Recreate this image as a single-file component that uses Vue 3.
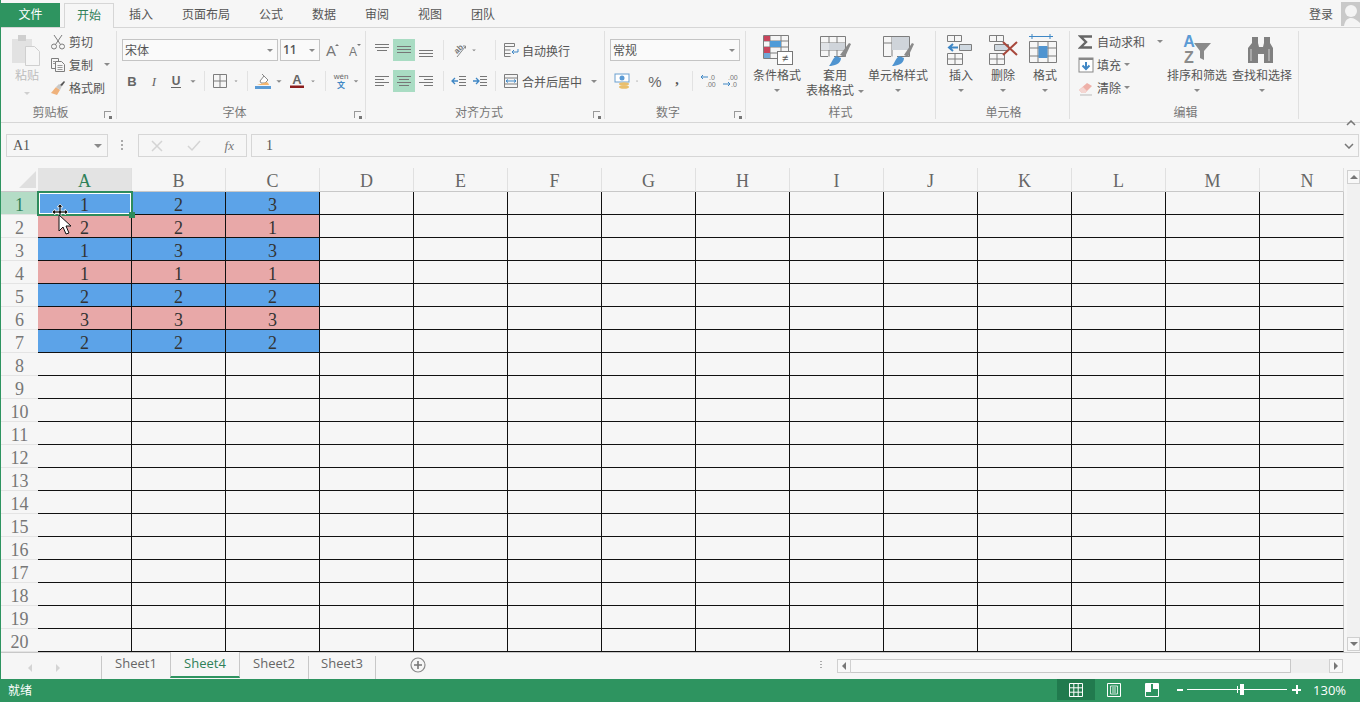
<script setup>
const G = 'fill="none" stroke="#7d7d7d"'
const lines = (rows) => rows.map(([x, y, l]) => `<path d="M${x} ${y}.5h${l}" stroke="#777"/>`).join("")

// 16x16 icons unless noted
const icons = {
  cut: `<circle cx="4" cy="12.5" r="2.5" ${G}/><circle cx="12" cy="12.5" r="2.5" ${G}/><path d="M5.5 10.5 12 1M10.5 10.5 4 1" ${G}/>`,
  copy: `<path d="M5 11.5H1.5v-10h7v3" ${G}/><path d="M5.5 4.5h6l3 3v7h-9z" ${G}/><path d="M7.5 8.5h5M7.5 10.5h5M7.5 12.5h5M3 4.5h3M3 6.5h2" stroke="#999"/>`,
  brush: `<path d="M1 13 6 7l4 3-3 5z" fill="#efb27c"/><path d="M6 7l3-3 3 2-2 4z" fill="#c8c8c8"/><path d="M10 5l4-4 1 1-3 4z" fill="#555"/>`,
  sum: `<path d="M14 2.500H2.500L8 8l-5.500 5.500H14" fill="none" stroke="#666" stroke-width="2.400"/>`,
  fill: `<rect x="1" y="1" width="14" height="14" fill="#fff" stroke="#888"/><path d="M1 1h14v2H1z" fill="#888"/><path d="M8 5v7M4.500 8.500 8 12l3.500-3.500" fill="none" stroke="#3f87c5" stroke-width="2"/>`,
  eraser: `<path d="M1 10 9 3l5 3-7 7H4z" fill="#eeb0a8"/><path d="M1 10l3 3h3l2-2-4-4z" fill="#f4d6d2"/><path d="M2 15h12" stroke="#bbb"/>`,
  bold: `<text x="8" y="13" text-anchor="middle" font-size="13" font-weight="700" font-family="Liberation Sans" fill="#666">B</text>`,
  italic: `<text x="8" y="13" text-anchor="middle" font-size="13" font-style="italic" font-family="Liberation Serif" fill="#666">I</text>`,
  under: `<text x="8" y="12" text-anchor="middle" font-size="12" font-weight="700" font-family="Liberation Sans" fill="#666">U</text><path d="M3 14.500h10" stroke="#666"/>`,
  borders: `<path d="M1.500 1.500h13v13h-13zM8 1.500v13M1.500 8h13" ${G}/>`,
  paint: `<path d="M5 8 9 3l4 4-3 3H6z" fill="#fff" stroke="#888"/><path d="M9 3 7 1" stroke="#888"/><path d="M12 9c1 1 2 2 2 3H2" fill="#f5b66e"/><path d="M0 13h16v3H0z" fill="#5b9bd5"/>`,
  color: `<text x="8" y="11" text-anchor="middle" font-size="13" font-weight="700" font-family="Liberation Sans" fill="#666">A</text><path d="M1 12.500h14V15H1z" fill="#8c1d1d"/>`,
  up: `<text x="7" y="14" text-anchor="middle" font-size="15" font-family="Liberation Sans" fill="#777">A</text><path d="M11 4l2-2 2 2z" fill="#777"/>`,
  down: `<text x="7" y="14" text-anchor="middle" font-size="12" font-family="Liberation Sans" fill="#777">A</text><path d="M11 2l2 2 2-2z" fill="#777"/>`,
  alTop: lines([[1, 2, 14], [1, 5, 14], [3, 8, 10]]),
  alMid: lines([[1, 4, 14], [1, 7, 14], [1, 10, 14]]),
  alBot: lines([[1, 8, 14], [1, 11, 14], [1, 14, 14]]),
  alLeft: lines([[1, 3, 14], [1, 6, 9], [1, 9, 14], [1, 12, 9]]),
  alCenter: lines([[1, 3, 14], [3, 6, 10], [1, 9, 14], [3, 12, 10]]),
  alRight: lines([[1, 3, 14], [6, 6, 9], [1, 9, 14], [6, 12, 9]]),
  orient: `<text x="3" y="11" font-size="8" font-weight="700" transform="rotate(-45 6 8)" font-family="Liberation Sans" fill="#777">ab</text><path d="M6 15 14 5M12 4h2.500v2.500" fill="none" stroke="#888"/>`,
  indL: `<path d="M1 8h6M4 5 1 8l3 3" fill="none" stroke="#3f87c5" stroke-width="1.300"/>` + lines([[8, 3, 7], [8, 6, 7], [8, 9, 7], [8, 12, 7]]),
  indR: `<path d="M1 8h6M4 5l3 3-3 3" fill="none" stroke="#3f87c5" stroke-width="1.300"/>` + lines([[8, 3, 7], [8, 6, 7], [8, 9, 7], [8, 12, 7]]),
  wrap: `<path d="M1.500 1.500h10v3h-10zM1.500 4.500v10h6M1.500 8h6M1.500 11.500h6" ${G}/><path d="M15 7v3H9M11 8 9 10l2 2" fill="none" stroke="#3f87c5"/>`,
  merge: `<path d="M1.500 1.500h13v13h-13zM1.500 5h13M1.500 11h13" ${G}/><path d="M3 8h10M5 6.500 3 8l2 1.500M11 6.500 13 8l-2 1.500" fill="none" stroke="#3f87c5"/>`,
  money: `<rect x="1" y="1" width="14" height="8" fill="#fff" stroke="#6a9fcf"/><circle cx="8" cy="5" r="2.500" fill="#5b9bd5"/><ellipse cx="10" cy="11" rx="5" ry="1.800" fill="#e9bf6d"/><ellipse cx="10" cy="14" rx="5" ry="1.800" fill="#e9bf6d"/>`,
  percent: `<text x="8" y="14" text-anchor="middle" font-size="15" font-family="Liberation Sans" fill="#666">%</text>`,
  comma: `<text x="8" y="11" text-anchor="middle" font-size="16" font-weight="700" font-family="Liberation Serif" fill="#555">,</text>`,
  decUp: `<text x="9" y="7" font-size="7" font-family="Liberation Sans" fill="#777">.0</text><text x="6" y="14" font-size="7" font-family="Liberation Sans" fill="#777">.00</text><path d="M1 4h7M3 2 1 4l2 2" fill="none" stroke="#3f87c5"/>`,
  decDown: `<text x="6" y="7" font-size="7" font-family="Liberation Sans" fill="#777">.00</text><text x="9" y="14" font-size="7" font-family="Liberation Sans" fill="#777">.0</text><path d="M1 11h7M6 9l2 2-2 2" fill="none" stroke="#3f87c5"/>`,
  caret: `<path d="M0 0h6L3 3z" fill="#8a8a8a" transform="translate(5 7)"/>`,
}

const large = {
  cond: `<path d="M3.500 2.500h25v23h-25zM3.500 8h25M3.500 14h25M3.500 20h25M10 2.500v23M21 2.500v23" ${G}/><path d="M10 8h11v6H10z" fill="#4f9bd8"/><path d="M4 3h6v5H4zM4 14h6v6H4z" fill="#c9455c"/><path d="M4 20h6v5H4z" fill="#6fa8d6"/><rect x="17.500" y="18.500" width="15" height="13" fill="#fff" stroke="#777"/><text x="25" y="29" text-anchor="middle" font-size="11" font-family="Liberation Sans" fill="#555">≠</text>`,
  table: `<path d="M2.500 3.500h25v20H16" ${G}/><path d="M2.500 3.500v20H10M11 3.500v20M19 3.500v20M2.500 10h25M2.500 17h25" ${G}/><path d="M11 10h16v7H11z" fill="#cfd4da"/><path d="M3 10h8v7H3z" fill="#dfe2e6"/><path d="M22 22l9-12 2 1-6 13z" fill="#8a8a8a"/><path d="M11 33c5 0 12-2 12-8l-5-2c-4 3-4 7-7 10z" fill="#4f94d0"/>`,
  style: `<path d="M2.500 3.500h26v20H16M2.500 3.500v20H10M2.500 10h26M11 3.500v20M24 3.500v8" ${G}/><path d="M11 4h17v13H11z" fill="#cfd4da"/><path d="M23 22l8-12 2 1-6 13z" fill="#8a8a8a"/><path d="M11 33c5 0 12-2 12-8l-5-2c-4 3-4 7-7 10z" fill="#4f94d0"/>`,
  insert: `<path d="M3.500 2.500h14v6h-14zM10.500 2.500v6M3.500 20.500h15v11h-15zM11 20.500v11M3.500 26h15M15.500 11.500h12v6h-12zM21.500 11.500v6" ${G}/><path d="M16 12h11v5H16z" fill="#cfd8e0"/><path d="M14 14.500H6M9 11l-4 3.500 4 3.500" fill="none" stroke="#3f87c5" stroke-width="2"/>`,
  remove: `<path d="M3.500 2.500h14v6h-14zM10.500 2.500v6M3.500 20.500h15v11h-15zM11 20.500v11M3.500 26h15M8.500 11.500h14v6h-14z" ${G}/><path d="M9 12h13v5H9z" fill="#cfd8e0"/><path d="M17 9l14 13M31 9 17 22" stroke="#a8483c" stroke-width="2"/>`,
  format: `<path d="M1 3.500h24M4 1v5M22 1v5M5 3.500h16" fill="none" stroke="#3f87c5"/><path d="M1.500 8.500h27v21M1.500 8.500v21M10 8.500v21M20 8.500v21M1.500 15h27M1.500 23h27M1.500 29.500h27" ${G}/><path d="M10.500 13h9v12h-9z" fill="#4f94d0"/>`,
  sort: `<text x="9" y="14" text-anchor="middle" font-size="16" font-weight="700" font-family="Liberation Sans" fill="#5b9bd5">A</text><text x="9" y="30" text-anchor="middle" font-size="16" font-weight="700" font-family="Liberation Sans" fill="#8a8a8a">Z</text><path d="M14 10h17l-7 8v9l-4-2v-7z" fill="#8a8a8a"/>`,
  find: `<path d="M7 4h6v6l1 4h4l1-4V4h6v6l3 5v15H19V21h-6v9H3V15l4-5z" fill="#808080"/><path d="M6 16v12M24 16v12" stroke="#a8a8a8" stroke-width="2"/>`,
}

const tabs = ["插入", "页面布局", "公式", "数据", "审阅", "视图", "团队"]
const tabWidths = [54, 76, 54, 52, 54, 52, 54]

const fontRow = [
  { w: 20, i: "bold" }, { w: 24, i: "italic" }, { w: 20, i: "under" }, { w: 14, i: "caret" }, { sep: 1, w: 8 },
  { w: 24, i: "borders" }, { w: 8, i: "caret" }, { sep: 1, w: 14 }, { w: 18, i: "paint" }, { w: 14, i: "caret" },
  { w: 22, i: "color" }, { w: 10, i: "caret" }, { sep: 1, w: 14 }, { w: 18, wen: 1 }, { w: 12, i: "caret" },
]
const alignTop = [
  { w: 22, i: "alTop" }, { w: 22, i: "alMid", on: 1 }, { w: 22, i: "alBot" }, { sep: 1, w: 12 },
  { w: 20, i: "orient" }, { w: 10, i: "caret" }, { w: 8 }, { sep: 1, w: 16 },
]
const alignBottom = [
  { w: 22, i: "alLeft" }, { w: 22, i: "alCenter", on: 1 }, { w: 22, i: "alRight" }, { sep: 1, w: 12 },
  { w: 20, i: "indL" }, { w: 22, i: "indR" }, { sep: 1, w: 8 }, { w: 4 },
]
const numberRow = [
  { w: 24, i: "money" }, { w: 6, i: "caret" }, { w: 30, i: "percent" }, { w: 14, i: "comma" }, { sep: 1, w: 16 },
  { w: 16, i: "decUp" }, { w: 6 }, { w: 16, i: "decDown" },
]

const styleBtns = [
  { w: 62, i: "cond", label: ["条件格式"] },
  { w: 54, i: "table", label: ["套用", "表格格式"], inline: true },
  { w: 72, i: "style", label: ["单元格样式"] },
]
const cellBtns = [
  { w: 42, i: "insert", label: ["插入"] },
  { w: 42, i: "remove", label: ["删除"] },
  { w: 42, i: "format", label: ["格式"] },
]
const editBtns = [
  { w: 62, i: "sort", label: ["排序和筛选"] },
  { w: 68, i: "find", label: ["查找和选择"] },
]

const columns = "ABCDEFGHIJKLMN".split("")
const data = [
  [1, 2, 3],
  [2, 2, 1],
  [1, 3, 3],
  [1, 1, 1],
  [2, 2, 2],
  [3, 3, 3],
  [2, 2, 2],
]
const rows = Array.from({ length: 20 }, (_, i) => i + 1)

function rowClass(r) {
  if (r > 7) return ""
  return r % 2 ? "blue" : "pink"
}
function cellValue(r, c) {
  return data[r - 1] ? data[r - 1][c] : ""
}
</script>

<template>
  <div class="app">
    <!-- 탭 -->
    <div class="tabbar">
      <div class="file">文件</div>
      <div class="tab active">开始</div>
      <div v-for="(t, n) in tabs" :key="t" class="tab" :style="{ width: tabWidths[n] + 'px' }">{{ t }}</div>
      <div class="login">登录</div>
      <svg class="avatar" width="19" height="24" viewBox="0 0 19 24">
        <path d="M0 0h19v24H0z" fill="#c9c9c9" />
        <circle cx="10" cy="9" r="6" fill="#f4f4f4" />
        <path d="M3 24c1-6 4-8 7-8s6 2 9 5v3z" fill="#f4f4f4" />
      </svg>
    </div>

    <div class="ribbon">
      <section class="group clip">
        <div class="body clip-body">
          <div class="paste">
            <svg width="32" height="32" viewBox="0 0 32 32">
              <path d="M1 5h20v24H1z" fill="#e2e2e2" />
              <path d="M7 1h8v6H7z" fill="#cfcfcf" />
              <path d="M14.500 12.500h9l5 5v14h-14z" fill="#f6f6f6" stroke="#cfcfcf" />
            </svg>
            <span>粘贴</span>
            <i class="caret light"></i>
          </div>
          <div class="small-col">
            <div class="small"><svg width="16" height="16" viewBox="0 0 16 16" v-html="icons.cut" /><span>剪切</span></div>
            <div class="small"><svg width="16" height="16" viewBox="0 0 16 16" v-html="icons.copy" /><span>复制</span><i class="caret copy-caret"></i></div>
            <div class="small"><svg width="16" height="16" viewBox="0 0 16 16" v-html="icons.brush" /><span>格式刷</span></div>
          </div>
        </div>
        <div class="label">剪贴板<i class="launcher"></i></div>
      </section>

      <section class="group font">
        <div class="body rows">
          <div class="row">
            <div class="select font-name"><span>宋体</span><i class="caret"></i></div>
            <div class="select font-size"><span>11</span><i class="caret"></i></div>
            <span class="cell w22"><svg width="16" height="16" viewBox="0 0 16 16" v-html="icons.up" /></span>
            <span class="cell w22"><svg width="16" height="16" viewBox="0 0 16 16" v-html="icons.down" /></span>
          </div>
          <div class="row">
            <span v-for="(c, n) in fontRow" :key="n" class="cell" :class="{ sep: c.sep }" :style="{ width: c.w + 'px' }">
              <svg v-if="c.i" width="16" height="16" viewBox="0 0 16 16" v-html="icons[c.i]" />
              <span v-if="c.wen" class="wen"><b>wén</b><b class="wen-zi">文</b></span>
            </span>
          </div>
        </div>
        <div class="label">字体<i class="launcher"></i></div>
      </section>

      <section class="group align">
        <div class="body rows">
          <div class="row">
            <span v-for="(c, n) in alignTop" :key="n" class="cell" :class="{ sep: c.sep, on: c.on }" :style="{ width: c.w + 'px' }">
              <svg v-if="c.i" width="16" height="16" viewBox="0 0 16 16" v-html="icons[c.i]" />
            </span>
            <svg class="inline-ic" width="16" height="16" viewBox="0 0 16 16" v-html="icons.wrap" />
            <span class="wrap-txt">自动换行</span>
          </div>
          <div class="row">
            <span v-for="(c, n) in alignBottom" :key="n" class="cell" :class="{ sep: c.sep, on: c.on }" :style="{ width: c.w + 'px' }">
              <svg v-if="c.i" width="16" height="16" viewBox="0 0 16 16" v-html="icons[c.i]" />
            </span>
            <svg class="inline-ic" width="16" height="16" viewBox="0 0 16 16" v-html="icons.merge" />
            <span class="wrap-txt">合并后居中</span>
            <i class="caret merge-caret"></i>
          </div>
        </div>
        <div class="label">对齐方式<i class="launcher"></i></div>
      </section>

      <section class="group number">
        <div class="body rows">
          <div class="row">
            <div class="select num-format"><span>常规</span><i class="caret"></i></div>
          </div>
          <div class="row">
            <span v-for="(c, n) in numberRow" :key="n" class="cell" :class="{ sep: c.sep }" :style="{ width: c.w + 'px' }">
              <svg v-if="c.i" width="16" height="16" viewBox="0 0 16 16" v-html="icons[c.i]" />
            </span>
          </div>
        </div>
        <div class="label">数字<i class="launcher"></i></div>
      </section>

      <section class="group styles">
        <div class="body bigs">
          <div v-for="b in styleBtns" :key="b.i" class="big" :style="{ width: b.w + 'px' }">
            <svg width="34" height="34" viewBox="0 0 34 34" v-html="large[b.i]" />
            <span v-for="l in b.label" :key="l" class="big-txt">{{ l }}<i v-if="b.inline && l === '表格格式'" class="caret side"></i></span>
            <i v-if="!b.inline" class="caret"></i>
          </div>
        </div>
        <div class="label">样式</div>
      </section>

      <section class="group cells">
        <div class="body bigs">
          <div v-for="b in cellBtns" :key="b.i" class="big" :style="{ width: b.w + 'px' }">
            <svg width="34" height="34" viewBox="0 0 34 34" v-html="large[b.i]" />
            <span class="big-txt">{{ b.label[0] }}</span>
            <i class="caret"></i>
          </div>
        </div>
        <div class="label">单元格</div>
      </section>

      <section class="group edit">
        <div class="body bigs">
          <div class="small-col edit-col">
            <div class="small"><svg width="16" height="16" viewBox="0 0 16 16" v-html="icons.sum" /><span>自动求和</span><i class="caret sum-caret"></i></div>
            <div class="small"><svg width="16" height="16" viewBox="0 0 16 16" v-html="icons.fill" /><span>填充</span><i class="caret"></i></div>
            <div class="small"><svg width="16" height="16" viewBox="0 0 16 16" v-html="icons.eraser" /><span>清除</span><i class="caret"></i></div>
          </div>
          <div v-for="b in editBtns" :key="b.i" class="big" :style="{ width: b.w + 'px' }">
            <svg width="34" height="34" viewBox="0 0 34 34" v-html="large[b.i]" />
            <span class="big-txt">{{ b.label[0] }}</span>
            <i class="caret"></i>
          </div>
        </div>
        <div class="label">编辑</div>
      </section>

      <div class="collapse">
        <svg width="10" height="6" viewBox="0 0 10 6"><path d="M1 5l4-4 4 4" fill="none" stroke="#777" stroke-width="1.500" /></svg>
      </div>
    </div>

    <!-- 수식 입력줄 -->
    <div class="formula">
      <div class="namebox"><span>A1</span><i class="caret"></i></div>
      <div class="dots"></div>
      <div class="fx-btns">
        <svg width="12" height="12" viewBox="0 0 12 12"><path d="M1 1l10 10M11 1 1 11" stroke="#d4d4d4" stroke-width="1.500" /></svg>
        <svg width="14" height="12" viewBox="0 0 14 12"><path d="M1 6l4 4 8-9" fill="none" stroke="#d4d4d4" stroke-width="1.500" /></svg>
        <em>fx</em>
      </div>
      <div class="fx-input">
        <span>1</span>
        <svg width="10" height="6" viewBox="0 0 10 6"><path d="M1 1l4 4 4-4" fill="none" stroke="#777" stroke-width="1.500" /></svg>
      </div>
    </div>

    <!-- 시트 영역 -->
    <div class="sheet-wrap">
      <div class="sheet">
        <div class="corner"><i></i></div>
        <div v-for="(c, n) in columns" :key="c" class="col-head" :class="{ current: n === 0, last: n === 13 }">{{ c }}</div>
        <template v-for="r in rows" :key="r">
          <div class="row-head" :class="{ current: r === 1 }">{{ r }}</div>
          <div
            v-for="(c, n) in columns"
            :key="c"
            class="data"
            :class="[n < 3 ? rowClass(r) : '', { last: n === 13 }]"
          >{{ cellValue(r, n) }}</div>
        </template>

        <div class="selection"><i></i></div>
        <svg class="pointer" width="26" height="32" viewBox="0 0 26 32">
          <path d="M11 1l3 3h-2v4h4V6l3 3-3 3v-2h-4v3h-2v-3H6v2L3 9l3-3v2h4V4H8z" fill="#111" stroke="#fff" stroke-width=".7" />
          <path d="M10 12v16l4-4 3 7 3-1-3-7h5z" fill="#fff" stroke="#111" />
        </svg>
      </div>
      <div class="vscroll">
        <div class="sc-btn"><i class="tri-up"></i></div>
        <div class="sc-btn"><i class="tri-down"></i></div>
      </div>
    </div>

    <!-- 시트 탭 -->
    <div class="sheetbar">
      <div class="nav"><i class="tri-l"></i><i class="tri-r"></i></div>
      <div class="stab">Sheet1</div>
      <div class="stab now">Sheet4</div>
      <div class="stab">Sheet2</div>
      <div class="stab bordered">Sheet3</div>
      <svg class="add" width="16" height="16" viewBox="0 0 16 16">
        <circle cx="8" cy="8" r="7" fill="none" stroke="#8a8a8a" stroke-width="1.200" />
        <path d="M8 4v8M4 8h8" stroke="#777" stroke-width="1.600" />
      </svg>
      <div class="split"></div>
      <div class="hscroll">
        <div class="sc-btn"><i class="tri-l dark"></i></div>
        <div class="thumb"></div>
        <div class="gutter"></div>
        <div class="sc-btn"><i class="tri-r dark"></i></div>
      </div>
    </div>

    <div class="status">
      <span class="ready">就绪</span>
      <div class="view on">
        <svg width="14" height="14" viewBox="0 0 14 14"><path d="M.5.500h13v13H.500zM4.800.500v13M9.200.500v13M.500 4.800h13M.500 9.200h13" fill="none" stroke="#fff" /></svg>
      </div>
      <div class="view">
        <svg width="14" height="14" viewBox="0 0 14 14"><path d="M.5.500h13v13H.500z" fill="none" stroke="#fff" /><path d="M3.500 3h7v8h-7zM5 5h4M5 7h4M5 9h4" fill="none" stroke="#fff" stroke-width=".8" /></svg>
      </div>
      <div class="view">
        <svg width="14" height="14" viewBox="0 0 14 14"><path d="M.5.500h13v13H.500z" fill="none" stroke="#fff" /><path d="M1 1h5v8H1zM8 1h5v5H8z" fill="#fff" /></svg>
      </div>
      <div class="zoom">
        <i class="minus"></i>
        <div class="slider"><i class="tick"></i><i class="knob"></i></div>
        <i class="plus"></i>
      </div>
      <span class="pct">130%</span>
    </div>
  </div>
</template>

<style>
html,
body {
  margin: 0;
  background: #f6f6f6;
}
</style>

<style scoped>
.app {
  width: 1360px;
  height: 702px;
  box-sizing: border-box;
  border-left: 1px solid #2e9460;
  overflow: hidden;
  background: #f6f6f6;
  color: #555;
  font-family: "Noto Sans CJK SC", sans-serif;
  font-size: 12px;
  display: flex;
  flex-direction: column;
}

i {
  display: block;
  font-style: normal;
}

.tabbar {
  height: 28px;
  box-sizing: border-box;
  padding-top: 3px;
  display: flex;
  border-bottom: 1px solid #d6d6d6;
  flex-shrink: 0;
}
.file {
  width: 59px;
  height: 24px;
  background: #2e9460;
  color: #fff;
  text-align: center;
  line-height: 22px;
  margin-right: 4px;
}
.tab {
  width: 50px;
  height: 24px;
  line-height: 22px;
  text-align: center;
}
.tab.active {
  height: 25px;
  box-sizing: border-box;
  border: 1px solid #d6d6d6;
  border-bottom: 0;
  background: #f6f6f6;
  color: #2e8058;
  line-height: 21px;
}
.login {
  margin-left: auto;
  margin-right: 8px;
  line-height: 22px;
}
.avatar {
  margin-top: -1px;
}

.ribbon {
  height: 95px;
  box-sizing: border-box;
  border-bottom: 1px solid #d6d6d6;
  padding-top: 3px;
  display: flex;
  flex-shrink: 0;
}
.group {
  height: 88px;
  box-sizing: border-box;
  border-right: 1px solid #e0e0e0;
  display: flex;
  flex-direction: column;
  flex-shrink: 0;
}
.clip {
  width: 116px;
}
.font {
  width: 249px;
  padding-left: 5px;
}
.align {
  width: 239px;
  padding-left: 5px;
}
.number {
  width: 141px;
  padding-left: 5px;
}
.styles {
  width: 190px;
}
.cells {
  width: 134px;
  padding-left: 4px;
}
.edit {
  width: 229px;
  padding-left: 8px;
}
.body {
  height: 73px;
  flex-shrink: 0;
}
.label {
  position: relative;
  height: 15px;
  line-height: 16px;
  text-align: center;
  color: #777;
}
.clip .label {
  padding-right: 16px;
}
.font .label {
  padding-right: 18px;
}
.align .label {
  padding-right: 17px;
}
.number .label {
  padding-right: 19px;
}
.cells .label {
  padding-right: 2px;
}
.edit .label {
  padding-right: 5px;
}
.launcher {
  position: absolute;
  right: 4px;
  bottom: 1px;
  width: 6px;
  height: 6px;
  border-left: 1px solid #999;
  border-top: 1px solid #999;
}
.clip .launcher {
  right: 5px;
}
.launcher::after {
  content: "";
  position: absolute;
  right: -1px;
  bottom: -1px;
  width: 3px;
  height: 3px;
  background: #777;
}

.rows {
  padding-top: 8px;
  box-sizing: border-box;
  display: flex;
  flex-direction: column;
  gap: 9px;
}
.row {
  height: 22px;
  display: flex;
  align-items: center;
}
.cell {
  height: 22px;
  display: flex;
  align-items: center;
  justify-content: center;
  flex-shrink: 0;
  box-sizing: border-box;
}
.w22 {
  width: 22px;
}
.cell.on {
  background: #a9dcc3;
}
.cell.sep::after {
  content: "";
  width: 1px;
  height: 20px;
  background: #e2e2e2;
}
.wen {
  display: flex;
  flex-direction: column;
  align-items: center;
  font-family: "Liberation Sans", sans-serif;
  font-size: 8px;
  line-height: 8px;
  color: #666;
}
.wen b {
  font-weight: 400;
}
.wen .wen-zi {
  font-family: "Noto Sans CJK SC", sans-serif;
  font-weight: 700;
  color: #3f87c5;
}
.inline-ic {
  flex-shrink: 0;
}
.wrap-txt {
  margin-left: 3px;
  color: #555;
  white-space: nowrap;
}
.merge-caret {
  margin-left: 9px;
}

.select {
  height: 22px;
  box-sizing: border-box;
  border: 1px solid #c4c4c4;
  background: #fafafa;
  display: flex;
  align-items: center;
  justify-content: space-between;
  padding: 0 4px 2px 2px;
}
.select .caret {
  margin-top: 2px;
}
.font-name {
  width: 156px;
  margin-right: 2px;
}
.font-size {
  width: 40px;
  margin-right: 1px;
  font-family: "Open Sans", sans-serif;
  font-weight: 600;
}
.num-format {
  width: 130px;
}

.caret {
  width: 0;
  height: 0;
  border-left: 3px solid transparent;
  border-right: 3px solid transparent;
  border-top: 3px solid #8a8a8a;
  flex-shrink: 0;
}
.caret.light {
  border-top-color: #cfcfcf;
}
.caret.side {
  display: inline-block;
  margin-left: 4px;
  vertical-align: middle;
}

.clip-body {
  display: flex;
  margin-top: -1px;
  height: 74px;
}
.paste {
  padding: 4px 0 0 10px;
  box-sizing: border-box;
  color: #bdbdbd;
  display: flex;
  flex-direction: column;
  align-items: center;
  width: 42px;
}
.paste span {
  line-height: 16px;
  margin-top: 1px;
}
.paste .caret {
  margin-top: 9px;
}
.small-col {
  width: 70px;
  margin-left: 7px;
}
.small {
  height: 23px;
  display: flex;
  align-items: center;
  gap: 3px;
}
.small span {
  color: #555;
}
.copy-caret {
  margin-left: 8px;
}
.sum-caret {
  margin-left: 9px;
}

.bigs {
  display: flex;
  margin-top: -1px;
  height: 74px;
}
.big {
  flex-shrink: 0;
  display: flex;
  flex-direction: column;
  align-items: center;
  padding-top: 3px;
  box-sizing: border-box;
  white-space: nowrap;
}
.big-txt {
  line-height: 15px;
  color: #555;
}
.big > .caret {
  margin-top: 7px;
}
.edit-col {
  width: 88px;
  margin: 0;
}

.collapse {
  margin: 81px 0 0 47px;
}

.formula {
  height: 45px;
  box-sizing: border-box;
  padding-top: 11px;
  display: flex;
  align-items: flex-start;
  flex-shrink: 0;
}
.namebox {
  margin-left: 5px;
  width: 102px;
  height: 23px;
  box-sizing: border-box;
  border: 1px solid #d6d6d6;
  display: flex;
  align-items: center;
  justify-content: space-between;
  padding: 0 5px 0 6px;
  font-family: "Liberation Serif", serif;
  font-size: 14px;
}
.namebox .caret {
  border-left-width: 4px;
  border-right-width: 4px;
  border-top-width: 4px;
}
.dots {
  width: 2px;
  height: 10px;
  margin: 6px 15px 0 13px;
  background: repeating-linear-gradient(#aaa 0 2px, transparent 2px 4px);
}
.fx-btns {
  width: 109px;
  height: 23px;
  box-sizing: border-box;
  border: 1px solid #d6d6d6;
  display: flex;
  align-items: center;
  justify-content: space-between;
  padding: 0 12px;
}
.fx-btns em {
  font-family: "Liberation Serif", serif;
  font-size: 13px;
  color: #777;
}
.fx-input {
  margin-left: 4px;
  width: 1108px;
  height: 23px;
  box-sizing: border-box;
  border: 1px solid #d6d6d6;
  display: flex;
  align-items: center;
  justify-content: space-between;
  padding: 0 4px 0 14px;
  font-family: "Liberation Serif", serif;
  font-size: 14px;
}

.sheet-wrap {
  height: 484px;
  display: flex;
  overflow: hidden;
  flex-shrink: 0;
}
.sheet {
  position: relative;
  width: 1343px;
  height: 484px;
  display: grid;
  grid-template-columns: 37px repeat(13, 94px) 84px;
  grid-auto-rows: 23px;
  grid-template-rows: 24px;
  overflow: hidden;
  font-family: "Liberation Serif", "Noto Sans CJK SC", serif;
  font-size: 18px;
  flex-shrink: 0;
}
.corner {
  border-bottom: 1px solid #c8c8c8;
  box-sizing: border-box;
  display: flex;
  justify-content: flex-end;
  align-items: flex-end;
  padding: 0 2px 3px 0;
}
.corner i {
  width: 0;
  height: 0;
  border-left: 17px solid transparent;
  border-bottom: 17px solid #dfdfdf;
}
.col-head {
  box-sizing: border-box;
  border-right: 1px solid #e0e0e0;
  border-bottom: 1px solid #c8c8c8;
  text-align: center;
  line-height: 27px;
  color: #666;
}
.col-head.last {
  padding-left: 11px;
  white-space: nowrap;
}
.col-head.current {
  background: #e3e3e3;
  color: #2e8058;
  border-bottom-color: #2e9460;
}
.row-head {
  box-sizing: border-box;
  border-bottom: 1px solid #e4e4e4;
  text-align: center;
  line-height: 26px;
  color: #777;
}
.row-head.current {
  background: #b4dcc6;
  color: #2e8058;
}
.data {
  box-sizing: border-box;
  border-right: 1px solid #111;
  border-bottom: 1px solid #111;
  text-align: center;
  line-height: 26px;
  color: #333;
}
.data.last {
  border-right-color: #c8c8c8;
}
.data.blue {
  background: #5ca3e8;
}
.data.pink {
  background: #e8a8a8;
}
.selection {
  position: absolute;
  left: 36px;
  top: 23px;
  width: 96px;
  height: 25px;
  box-sizing: border-box;
  border: 2px solid #2e8b5c;
  outline: 1px solid #fff;
  outline-offset: -3px;
}
.selection i {
  position: absolute;
  right: -4px;
  bottom: -4px;
  width: 6px;
  height: 6px;
  background: #2e8b5c;
}
.pointer {
  position: absolute;
  left: 48px;
  top: 35px;
}

.vscroll {
  width: 13px;
  margin: 2px 0 1px 3px;
  display: flex;
  flex-direction: column;
  justify-content: space-between;
  background: #f1f1f1;
}
.sc-btn {
  width: 13px;
  height: 14px;
  box-sizing: border-box;
  border: 1px solid #d0d0d0;
  background: #f8f8f8;
  display: flex;
  align-items: center;
  justify-content: center;
  flex-shrink: 0;
}
.tri-up,
.tri-down,
.tri-l,
.tri-r {
  width: 0;
  height: 0;
}
.tri-up {
  border-left: 4px solid transparent;
  border-right: 4px solid transparent;
  border-bottom: 4px solid #777;
}
.tri-down {
  border-left: 4px solid transparent;
  border-right: 4px solid transparent;
  border-top: 4px solid #777;
}
.tri-l {
  border-top: 4px solid transparent;
  border-bottom: 4px solid transparent;
  border-right: 4px solid #d4d4d4;
}
.tri-r {
  border-top: 4px solid transparent;
  border-bottom: 4px solid transparent;
  border-left: 4px solid #d4d4d4;
}
.tri-l.dark {
  border-right-color: #777;
}
.tri-r.dark {
  border-left-color: #777;
}

.sheetbar {
  height: 27px;
  box-sizing: border-box;
  border-top: 1px solid #c8c8c8;
  display: flex;
  align-items: flex-start;
  flex-shrink: 0;
  font-family: "Open Sans", sans-serif;
  font-size: 13px;
}
.nav {
  width: 101px;
  height: 24px;
  box-sizing: border-box;
  padding: 0 41px 0 27px;
  display: flex;
  align-items: center;
  justify-content: space-between;
  border-right: 1px solid #c8c8c8;
  margin-top: 3px;
}
.stab {
  width: 68px;
  height: 24px;
  margin-top: 3px;
  box-sizing: border-box;
  text-align: center;
  line-height: 15px;
  color: #666;
}
.stab.now {
  width: 70px;
  height: 26px;
  margin-top: -1px;
  background: #f6f6f6;
  border-left: 1px solid #c8c8c8;
  border-right: 1px solid #c8c8c8;
  border-bottom: 2px solid #2e9460;
  line-height: 23px;
  color: #2e8058;
}
.stab.bordered {
  border-left: 1px solid #c8c8c8;
  border-right: 1px solid #c8c8c8;
}
.add {
  margin: 4px 0 0 34px;
  flex-shrink: 0;
}
.split {
  width: 2px;
  height: 9px;
  margin: 8px 15px 0 394px;
  background: repeating-linear-gradient(#aaa 0 1px, transparent 1px 3px);
  flex-shrink: 0;
}
.hscroll {
  margin-top: 6px;
  display: flex;
  width: 506px;
  flex-shrink: 0;
}
.thumb {
  width: 440px;
  height: 14px;
  box-sizing: border-box;
  border: 1px solid #c8c8c8;
  border-left: 0;
  background: #f8f8f8;
}
.gutter {
  width: 38px;
  height: 14px;
  background: #efefef;
}
.hscroll .sc-btn {
  width: 14px;
}

.status {
  height: 23px;
  box-sizing: border-box;
  padding-bottom: 2px;
  background: #2e9460;
  color: #fff;
  display: flex;
  align-items: center;
  flex-shrink: 0;
}
.ready {
  margin-left: 7px;
  margin-right: 1025px;
}
.view {
  width: 38px;
  height: 21px;
  display: flex;
  align-items: center;
  justify-content: center;
  flex-shrink: 0;
}
.view.on {
  background: #217a4e;
}
.zoom {
  margin-left: 6px;
  display: flex;
  align-items: center;
  flex-shrink: 0;
}
.minus {
  width: 6px;
  height: 2px;
  background: #fff;
}
.slider {
  position: relative;
  width: 100px;
  height: 1px;
  margin: 0 5px 0 4px;
  background: #fff;
}
.tick {
  position: absolute;
  left: 50px;
  top: -3px;
  width: 1px;
  height: 7px;
  background: #fff;
}
.knob {
  position: absolute;
  left: 53px;
  top: -5px;
  width: 4px;
  height: 11px;
  background: #fff;
}
.plus {
  position: relative;
  width: 9px;
  height: 2px;
  background: #fff;
}
.plus::after {
  content: "";
  position: absolute;
  left: 3.500px;
  top: -3.500px;
  width: 2px;
  height: 9px;
  background: #fff;
}
.pct {
  margin-left: 12px;
  font-family: "Open Sans", sans-serif;
  font-size: 13px;
}
</style>
